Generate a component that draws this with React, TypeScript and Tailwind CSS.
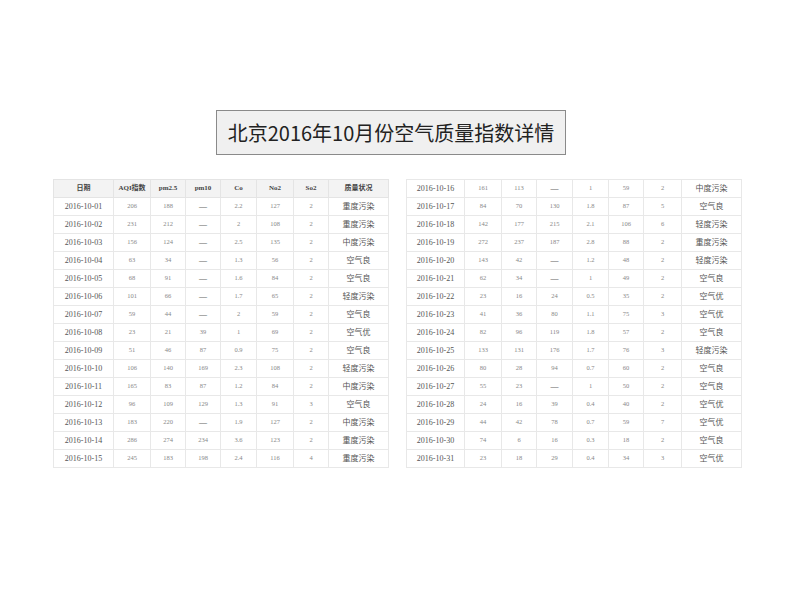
type Row = [string, string, string, string, string, string, string, string];

const leftRows: Row[] = [
  ["2016-10-01", "206", "188", "—", "2.2", "127", "2", "重度污染"],
  ["2016-10-02", "231", "212", "—", "2", "108", "2", "重度污染"],
  ["2016-10-03", "156", "124", "—", "2.5", "135", "2", "中度污染"],
  ["2016-10-04", "63", "34", "—", "1.3", "56", "2", "空气良"],
  ["2016-10-05", "68", "91", "—", "1.6", "84", "2", "空气良"],
  ["2016-10-06", "101", "66", "—", "1.7", "65", "2", "轻度污染"],
  ["2016-10-07", "59", "44", "—", "2", "59", "2", "空气良"],
  ["2016-10-08", "23", "21", "39", "1", "69", "2", "空气优"],
  ["2016-10-09", "51", "46", "87", "0.9", "75", "2", "空气良"],
  ["2016-10-10", "106", "140", "169", "2.3", "108", "2", "轻度污染"],
  ["2016-10-11", "165", "83", "87", "1.2", "84", "2", "中度污染"],
  ["2016-10-12", "96", "109", "129", "1.3", "91", "3", "空气良"],
  ["2016-10-13", "183", "220", "—", "1.9", "127", "2", "中度污染"],
  ["2016-10-14", "286", "274", "234", "3.6", "123", "2", "重度污染"],
  ["2016-10-15", "245", "183", "198", "2.4", "116", "4", "重度污染"],
];

const rightRows: Row[] = [
  ["2016-10-16", "161", "113", "—", "1", "59", "2", "中度污染"],
  ["2016-10-17", "84", "70", "130", "1.8", "87", "5", "空气良"],
  ["2016-10-18", "142", "177", "215", "2.1", "106", "6", "轻度污染"],
  ["2016-10-19", "272", "237", "187", "2.8", "88", "2", "重度污染"],
  ["2016-10-20", "143", "42", "—", "1.2", "48", "2", "轻度污染"],
  ["2016-10-21", "62", "34", "—", "1", "49", "2", "空气良"],
  ["2016-10-22", "23", "16", "24", "0.5", "35", "2", "空气优"],
  ["2016-10-23", "41", "36", "80", "1.1", "75", "3", "空气优"],
  ["2016-10-24", "82", "96", "119", "1.8", "57", "2", "空气良"],
  ["2016-10-25", "133", "131", "176", "1.7", "76", "3", "轻度污染"],
  ["2016-10-26", "80", "28", "94", "0.7", "60", "2", "空气良"],
  ["2016-10-27", "55", "23", "—", "1", "50", "2", "空气良"],
  ["2016-10-28", "24", "16", "39", "0.4", "40", "2", "空气优"],
  ["2016-10-29", "44", "42", "78", "0.7", "59", "7", "空气优"],
  ["2016-10-30", "74", "6", "16", "0.3", "18", "2", "空气良"],
  ["2016-10-31", "23", "18", "29", "0.4", "34", "3", "空气优"],
];

const headers = ["日期", "AQI指数", "pm2.5", "pm10", "Co", "No2", "So2", "质量状况"];

const serif = { fontFamily: '"Liberation Serif", "Noto Sans CJK SC", serif' };

function cellClass(i: number, value: string) {
  if (i === 0 || i === 7)
    return "border border-[#e8e8e8] p-0 text-center text-[8px] leading-none text-[#555]";
  if (value === "—")
    return "border border-[#e8e8e8] p-0 text-center text-[8px] leading-none text-[#666]";
  return "border border-[#e8e8e8] p-0 text-center text-[6.5px] leading-none text-[#888]";
}

function DataTable({
  rows,
  widths,
  showHeader,
}: {
  rows: Row[];
  widths: number[];
  showHeader?: boolean;
}) {
  return (
    <table className="table-fixed border-collapse" style={serif}>
      <colgroup>
        {widths.map((w, i) => (
          <col key={i} style={{ width: w }} />
        ))}
      </colgroup>
      <tbody>
        {showHeader && (
          <tr className="h-[18px] bg-[#f3f3f3]">
            {headers.map((h) => (
              <td
                key={h}
                className="border border-[#e4e4e4] p-0 text-center text-[7px] font-bold leading-none text-[#444]"
              >
                {h}
              </td>
            ))}
          </tr>
        )}
        {rows.map((r) => (
          <tr key={r[0]} className="h-[18px]">
            {r.map((c, i) => (
              <td key={i} className={cellClass(i, c)}>
                {c}
              </td>
            ))}
          </tr>
        ))}
      </tbody>
    </table>
  );
}

export default function App() {
  return (
    <div className="h-[596px] w-[794px] bg-white">
      <div className="flex flex-col pt-[110px]">
        {/* Title */}
        <div
          className="ml-[216px] flex h-[45px] w-[350px] items-center justify-center border border-[#8a8a8a] bg-[#f0f0f0] text-[20px] text-[#222]"
          style={{ fontFamily: '"Noto Sans CJK SC", "Noto Sans", sans-serif' }}
        >
          北京2016年10月份空气质量指数详情
        </div>

        {/* Tables */}
        <div className="mt-[24px] flex items-start gap-[17px] pl-[53px]">
          <DataTable
            rows={leftRows}
            widths={[60, 37, 35, 35, 36, 37, 35, 60]}
            showHeader
          />
          <DataTable
            rows={rightRows}
            widths={[58, 37, 35, 36, 36, 35, 38, 60]}
          />
        </div>
      </div>
    </div>
  );
}
